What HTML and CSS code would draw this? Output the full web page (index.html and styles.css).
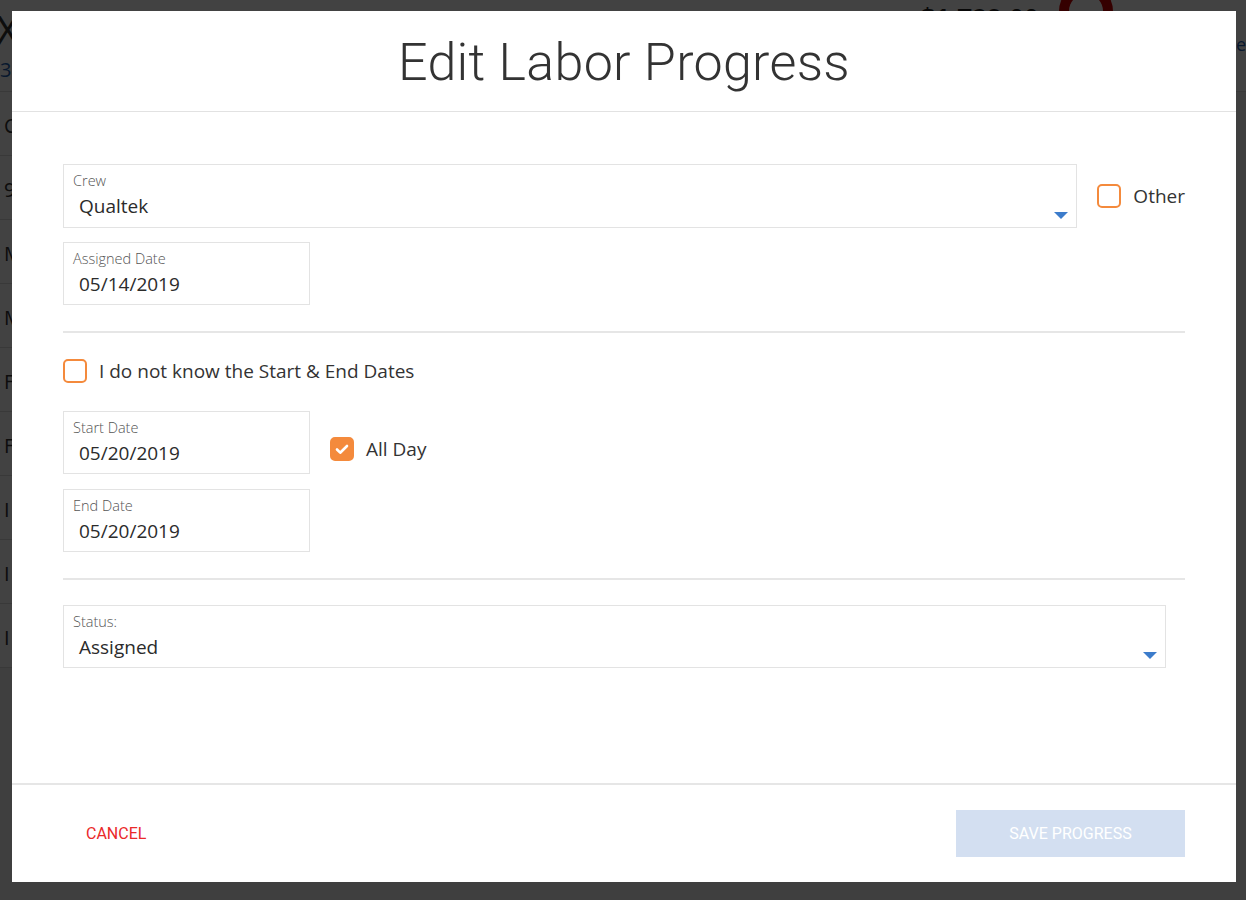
FILE: index.html
```html
<!DOCTYPE html>
<html lang="en">
<head>
  <meta charset="UTF-8" />
  <meta name="viewport" content="width=device-width, initial-scale=1" />
  <title>Edit Labor Progress</title>
  <link rel="stylesheet" href="styles.css">
</head>
<body>

  <!-- page behind the dialog -->
  <div class="page">
    <div class="page-top">
      <div class="page-left">
        <span class="big-x">X</span>
        <span class="blue-num">3</span>
      </div>
      <div class="page-amount">$1,729.00</div>
      <div class="donut"></div>
      <div class="page-right">re</div>
    </div>
    <div class="page-rows">
      <div class="page-row">C</div>
      <div class="page-row">9</div>
      <div class="page-row">M</div>
      <div class="page-row">M</div>
      <div class="page-row">F</div>
      <div class="page-row">F</div>
      <div class="page-row">I</div>
      <div class="page-row">I</div>
      <div class="page-row">I</div>
    </div>
  </div>

  <div class="overlay">
    <div class="modal">
      <div class="modal-header">
        <h1>Edit Labor Progress</h1>
      </div>

      <div class="modal-body">
        <div class="crew-row">
          <div class="field select">
            <label>Crew</label>
            <div class="value">Qualtek</div>
            <span class="caret"></span>
          </div>
          <div class="check">
            <span class="box"></span>
            <span>Other</span>
          </div>
        </div>

        <div class="field small gap-top">
          <label>Assigned Date</label>
          <div class="value">05/14/2019</div>
        </div>

        <hr class="divider">

        <div class="check">
          <span class="box"></span>
          <span>I do not know the Start &amp; End Dates</span>
        </div>

        <div class="date-row">
          <div class="field small">
            <label>Start Date</label>
            <div class="value">05/20/2019</div>
          </div>
          <div class="check all-day">
            <span class="box checked">
              <svg viewBox="0 0 24 24" width="24" height="24"><path d="M7 12.5l3.2 3.2L17 9" fill="none" stroke="#fff" stroke-width="2.6" stroke-linecap="round" stroke-linejoin="round"/></svg>
            </span>
            <span>All Day</span>
          </div>
        </div>

        <div class="field small end-date">
          <label>End Date</label>
          <div class="value">05/20/2019</div>
        </div>

        <hr class="divider">

        <div class="field select status">
          <label>Status:</label>
          <div class="value">Assigned</div>
          <span class="caret"></span>
        </div>
      </div>

      <div class="modal-footer">
        <button class="cancel-btn">CANCEL</button>
        <button class="save-btn">SAVE PROGRESS</button>
      </div>
    </div>
  </div>

</body>
</html>
```

FILE: styles.css
```css
* {
  box-sizing: border-box;
  margin: 0;
  padding: 0;
}

html, body {
  height: 100%;
  overflow: hidden;
}

body {
  font-family: "Open Sans", Arial, sans-serif;
  background: #f4f4f4;
  color: #333;
}

/* Background page */
.page {
  height: 100%;
}

.page-top {
  height: 92px;
  display: flex;
  border-bottom: 1px solid #ddd;
  background: #fff;
}

.page-left {
  width: 80px;
  display: flex;
  flex-direction: column;
  font-size: 40px;
  line-height: 40px;
  padding-top: 10px;
}

.big-x {
  margin-left: -4px;
}

.blue-num {
  font-size: 20px;
  color: #1f5fb0;
}

.page-amount {
  margin-left: 840px;
  padding-top: 0;
  font-size: 26px;
  font-weight: 700;
  color: #222;
}

.donut {
  width: 54px;
  height: 54px;
  margin: -16px 0 0 20px;
  border-radius: 50%;
  border: 10px solid #c00;
  border-top-color: #2e8b2e;
}

.page-right {
  margin-left: auto;
  padding-top: 32px;
  color: #1f5fb0;
  font-size: 18px;
}

.page-rows {
  width: 100px;
}

.page-row {
  height: 64px;
  border-bottom: 1px solid #ddd;
  font-size: 20px;
  padding: 20px 0 0 4px;
  background: #fff;
}

/* Overlay & modal */
.overlay {
  position: fixed;
  inset: 0;
  background: rgba(0, 0, 0, 0.74);
  padding: 11px 10px 18px 12px;
}

.modal {
  background: #fff;
  width: 1224px;
  height: 871px;
  display: flex;
  flex-direction: column;
}

.modal-header {
  height: 101px;
  border-bottom: 1px solid #e2e2e2;
  display: flex;
  justify-content: center;
  align-items: center;
}

.modal-header h1 {
  font-family: Roboto, "Open Sans", sans-serif;
  font-weight: 300;
  font-size: 52px;
  color: #333;
  letter-spacing: 0.3px;
  margin-top: 2px;
}

.modal-body {
  flex: 1;
  padding: 52px 51px 0;
}

/* Fields */
.field {
  position: relative;
  border: 1px solid #e3e3e3;
  height: 64px;
  padding: 6px 9px 0;
}

.field label {
  display: block;
  font-size: 14.5px;
  font-weight: 300;
  line-height: 19px;
  color: #555;
}

.field .value {
  font-size: 19px;
  line-height: 28px;
  padding-left: 6px;
  margin-top: 2px;
  color: #2b2b2b;
}

.field.small {
  width: 247px;
  height: 63px;
}

.gap-top {
  margin-top: 14px;
}

.caret {
  position: absolute;
  right: 8px;
  bottom: 8px;
  width: 0;
  height: 0;
  border-left: 7px solid transparent;
  border-right: 7px solid transparent;
  border-top: 7px solid #3c7ccb;
}

.crew-row {
  display: flex;
  align-items: center;
  gap: 20px;
}

.crew-row .select {
  flex: 1;
}

.status {
  width: 1103px;
  height: 63px;
}

.divider {
  border: none;
  border-top: 2px solid #e6e6e6;
  margin: 26px 0 25px;
}

/* Checkboxes */
.check {
  display: flex;
  align-items: center;
  gap: 12px;
  font-size: 19px;
  color: #333;
}

.box {
  width: 24px;
  height: 24px;
  border: 2px solid #f48a3c;
  border-radius: 5px;
  display: flex;
}

.box.checked {
  background: #f48a3c;
  border-color: #f48a3c;
}

.box.checked svg {
  margin: -2px;
}

.date-row {
  display: flex;
  align-items: flex-start;
  gap: 20px;
  margin-top: 27px;
}

.all-day {
  margin-top: 25px;
}

.end-date {
  margin-top: 15px;
}

/* Footer */
.modal-footer {
  height: 99px;
  border-top: 2px solid #e6e6e6;
  display: flex;
  align-items: center;
  justify-content: space-between;
  padding: 0 51px;
}

button {
  font-family: Roboto, Arial, sans-serif;
  font-size: 16px;
  border: none;
  background: none;
  cursor: pointer;
}

.cancel-btn {
  color: #ea2a2a;
  padding: 12px 23px;
}

.save-btn {
  width: 229px;
  height: 47px;
  background: #d3dff1;
  color: #fff;
}
```
